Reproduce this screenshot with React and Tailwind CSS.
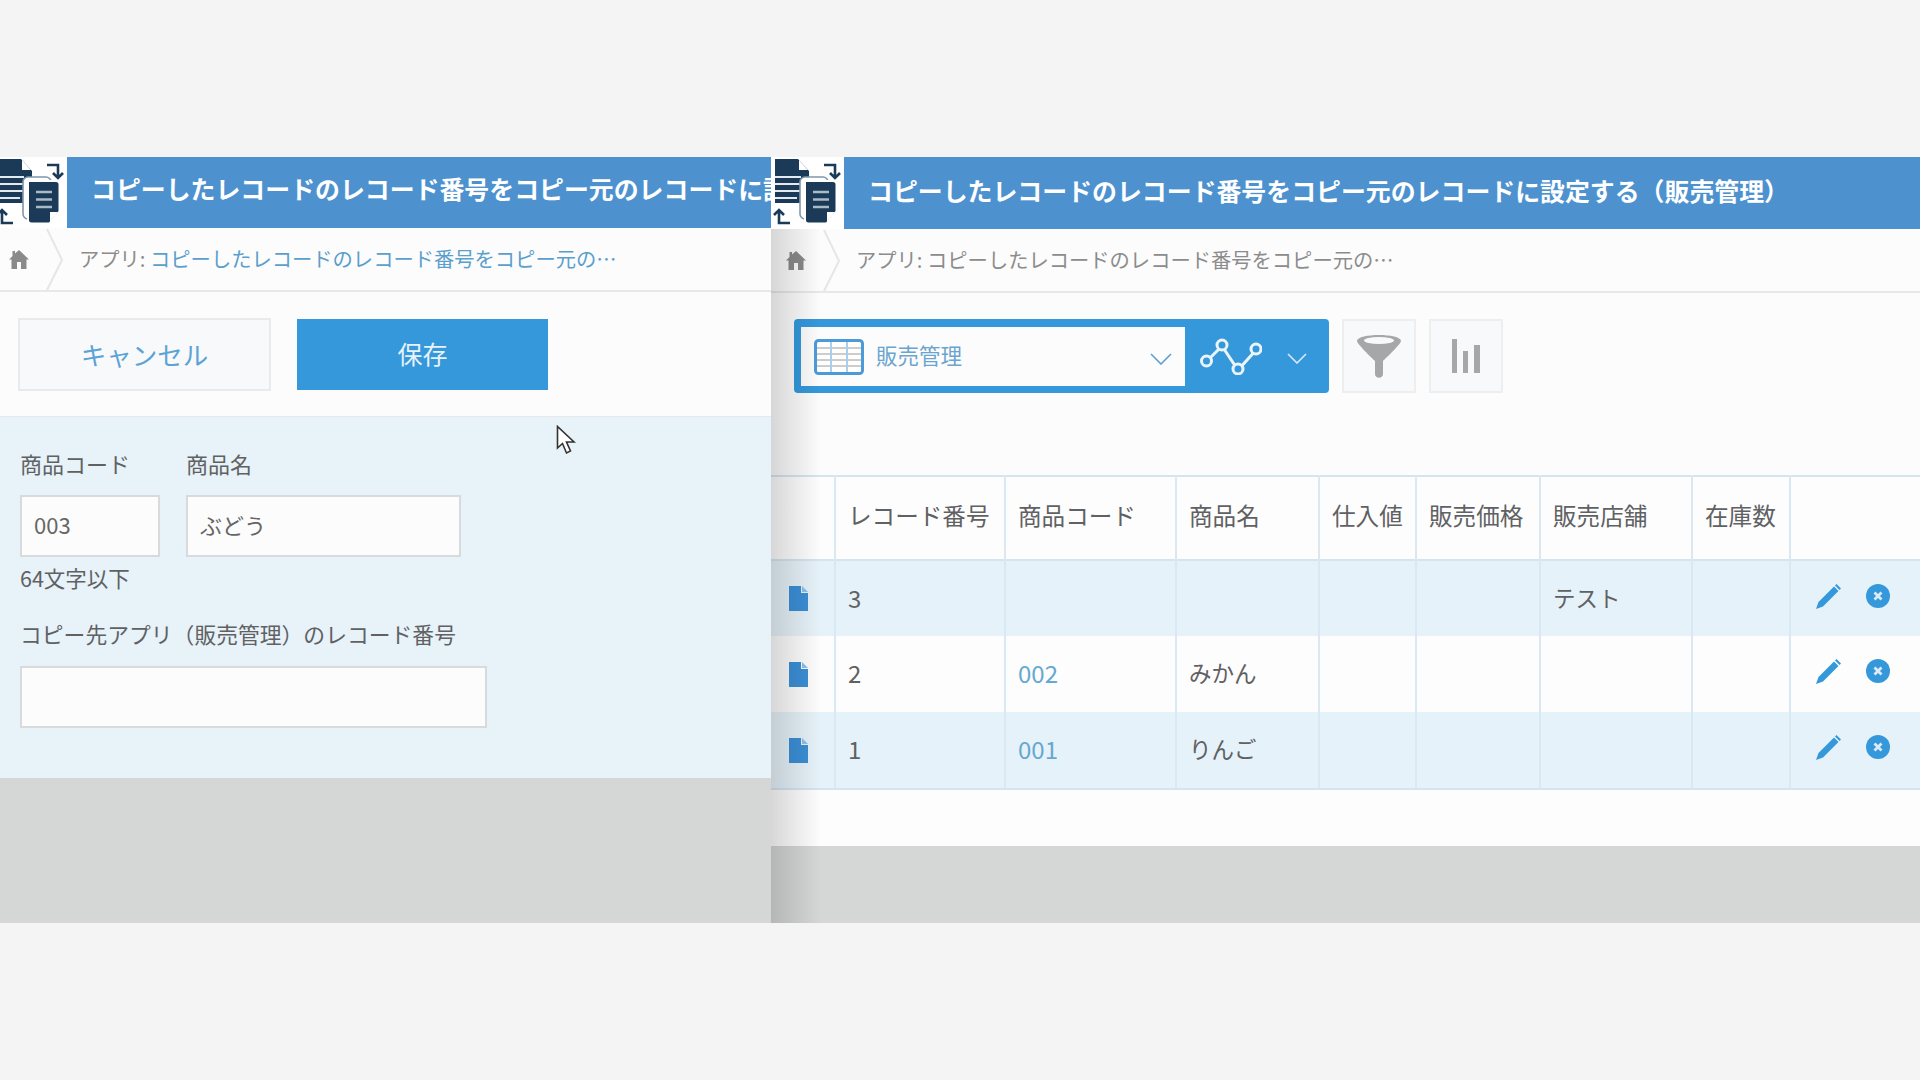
import React from "react";

const TITLE = "コピーしたレコードのレコード番号をコピー元のレコードに設定する（販売管理）";

function Logo() {
  return (
    <svg viewBox="0 0 73 72" className="h-[72px] w-[73px] shrink-0">
      <path d="M4 2H27L38 14V46H4Z" fill="#1b3a57" />
      <path d="M28 3L37 13H28Z" fill="#fff" />
      <path d="M4 20H30M4 27H30M4 34H30M4 41H26" stroke="#e4eaef" strokeWidth="2.2" />
      <rect x="29" y="20" width="28" height="42" rx="5" fill="#fff" stroke="#7f97ab" strokeWidth="1.6" />
      <path d="M33 23H62Q65 23 65 26V55L56 66H36Q33 66 33 63Z" fill="#fff" />
      <path d="M35 25H62Q64.5 25 64.5 27.5V54L55 65.5H37.5Q35 65.5 35 63Z" fill="#1b3a57" />
      <path d="M42 35H58M42 42.5H58M42 50H58" stroke="#a9bac8" strokeWidth="2.6" />
      <path d="M64 55L56 65V55Z" fill="#fff" />
      <path d="M53 8H64V20M59 16L64 21L69 16" fill="none" stroke="#1b3a57" strokeWidth="2.6" />
      <path d="M19 66H8V54M3 58L8 53L13 58" fill="none" stroke="#1b3a57" strokeWidth="2.6" />
    </svg>
  );
}

function Home() {
  return (
    <svg viewBox="0 0 20 20" className="h-5 w-5 shrink-0">
      <path d="M10 1L20 10.5H17.5V20H12V13H8V20H2.5V10.5H0L3.5 7V2H6V4.6Z" fill="#8a8a8a" />
    </svg>
  );
}

function Crumb({ left, link }) {
  return (
    <div className="flex h-[64px] shrink-0 items-center border-b-2 border-[#e8e8e8] bg-[#fcfcfc] text-[20.3px] text-[#8c8c8c]">
      <div className={left}>
        <Home />
      </div>
      <svg viewBox="0 0 18 63" className="ml-[17px] h-[63px] w-[18px] shrink-0">
        <path d="M1 1L16 32L1 62" fill="none" stroke="#e6e6e6" strokeWidth="2" />
      </svg>
      <span className="ml-[15px] pb-[2px] whitespace-nowrap">
        アプリ: <span className={link}>コピーしたレコードのレコード番号をコピー元の…</span>
      </span>
    </div>
  );
}

function Header({ logoClass, height, textClass }) {
  return (
    <div className={`flex shrink-0 overflow-hidden bg-white ${height}`}>
      <div className={logoClass}>
        <Logo />
      </div>
      <div className={`flex min-w-0 flex-1 items-center overflow-hidden bg-[#4d92cf] pl-[24px] text-[24.9px] font-bold whitespace-nowrap text-white ${textClass}`}>
        {TITLE}
      </div>
    </div>
  );
}

function Field({ label, cls, value }) {
  return (
    <div>
      <div className="mb-[17px] h-[30px] text-[22px] leading-[30px] text-[#5f6163] whitespace-nowrap">{label}</div>
      <div className={cls}>{value}</div>
    </div>
  );
}

const inputCls = "flex h-[62px] items-center border-2 border-[#d8dadb] bg-[#fcfcfc] px-3 pb-[3px] text-[22px] text-[#666]";

function LeftPanel() {
  return (
    <div className="relative flex h-full w-[771px] shrink-0 flex-col">
      <Header logoClass="-ml-[6px] w-[73px] shrink-0" height="h-[71px]" textClass="pb-[7px]" />
      <Crumb left="ml-[9px]" link="text-[#5b9fcc]" />
      <div className="flex h-[125px] shrink-0 items-center gap-[26px] border-b border-[#e6e8e9] bg-[#fcfcfc] pl-[18px]">
        <button className="h-[73px] w-[253px] border-2 border-[#e8ebec] bg-[#f7f9fa] text-[25.5px] text-[#5ba3d6]">キャンセル</button>
        <button className="h-[71px] w-[251px] bg-[#3498db] text-[25px] text-[#e8f2f9]">保存</button>
      </div>
      <div className="h-[361px] shrink-0 bg-[#e7f2f9] pt-[31px] pl-[20px]">
        <div className="flex gap-[26px]">
          <Field label="商品コード" cls={`${inputCls} w-[140px]`} value="003" />
          <Field label="商品名" cls={`${inputCls} w-[275px]`} value="ぶどう" />
        </div>
        <div className="mt-[6px] h-[30px] text-[21.5px] leading-[30px] text-[#5f6163]">64文字以下</div>
        <div className="mt-[26px] h-[30px] text-[21.8px] leading-[30px] text-[#5f6163] whitespace-nowrap">
          コピー先アプリ（販売管理）のレコード番号
        </div>
        <div className={`${inputCls} mt-[17px] w-[467px]`} />
      </div>
      <div className="flex-1 bg-[#d5d6d6]" />
      <svg viewBox="0 0 20 30" className="absolute top-[268px] left-[556px] h-[30px] w-[20px]">
        <path d="M1.5 1.5V23L6.5 18.5L10.5 28L14.5 26L10.5 17H18Z" fill="#fff" stroke="#333" strokeWidth="1.6" />
      </svg>
    </div>
  );
}

const COLS = [
  ["w-[64px]", ""],
  ["w-[170px]", "レコード番号"],
  ["w-[171px]", "商品コード"],
  ["w-[143px]", "商品名"],
  ["w-[97px]", "仕入値"],
  ["w-[124px]", "販売価格"],
  ["w-[152px]", "販売店舗"],
  ["w-[98px]", "在庫数"],
  ["w-[130px]", ""],
];

const ROWS = [
  { no: "3", code: "", name: "", store: "テスト", bg: "bg-[#e6f2f9]" },
  { no: "2", code: "002", name: "みかん", store: "", bg: "bg-[#fdfdfd]" },
  { no: "1", code: "001", name: "りんご", store: "", bg: "bg-[#e6f2f9]" },
];

const cell = "border-r-2 border-[#d9e8f2] px-[12px] pb-[2px] text-left font-normal whitespace-nowrap";

function DocIcon() {
  return (
    <svg viewBox="0 0 19 25" className="ml-[18px] h-[25px] w-[19px]">
      <path d="M0 0H12V7H19V25H0Z" fill="#3b8fd6" />
      <path d="M13 0L19 6H13Z" fill="#8fc0e8" />
    </svg>
  );
}

function PencilIcon() {
  return (
    <svg viewBox="0 0 26 26" className="h-[26px] w-[26px]">
      <path d="M0 26L2.5 19L18 3.5L22.5 8L7 23.5Z" fill="#3498db" />
      <path d="M20.5 1L25 5.5L23.5 7L19 2.5Z" fill="#3498db" />
    </svg>
  );
}

function CloseIcon() {
  return (
    <svg viewBox="0 0 24 24" className="h-[24px] w-[24px]">
      <circle cx="12" cy="12" r="12" fill="#3498db" />
      <path d="M8.5 8.5L15.5 15.5M15.5 8.5L8.5 15.5" stroke="#dcebf6" strokeWidth="2.8" />
    </svg>
  );
}

function Toolbar() {
  return (
    <div className="flex h-[182px] shrink-0 items-start gap-[13px] bg-[#fcfcfc] pt-[26px] pl-[23px]">
      <div className="flex h-[74px] w-[535px] items-center rounded bg-[#3498db] pl-[7px]">
        <div className="flex h-[59px] w-[384px] items-center bg-[#fcfcfc] pl-[13px]">
          <svg viewBox="0 0 50 36" className="mt-[2px] h-[36px] w-[50px] shrink-0">
            <rect x="1.5" y="1.5" width="47" height="33" rx="3" fill="#fff" stroke="#4d9ad8" strokeWidth="3" />
            <path d="M3 9H47M3 15H47M3 21H47M3 27H47" stroke="#9a9a9a" strokeWidth="1" />
            <path d="M17 3V33M33 3V33" stroke="#a8d0ee" strokeWidth="2" />
          </svg>
          <span className="ml-[12px] pb-[2px] text-[21.5px] text-[#6ba5cf]">販売管理</span>
          <svg viewBox="0 0 22 12" className="mt-[5px] mr-[13px] ml-auto h-[12px] w-[22px]">
            <path d="M1 1L11 11L21 1" fill="none" stroke="#5c9fd0" strokeWidth="1.6" />
          </svg>
        </div>
        <svg viewBox="0 0 62 38" className="ml-[15px] h-[38px] w-[62px] shrink-0">
          <path d="M7 24L22 9L38 33L57 12" fill="none" stroke="#eaf4fb" strokeWidth="3" />
          <circle cx="6.5" cy="24" r="5" fill="#3498db" stroke="#eaf4fb" strokeWidth="3" />
          <circle cx="22" cy="8" r="5" fill="#3498db" stroke="#eaf4fb" strokeWidth="3" />
          <circle cx="38" cy="32" r="5" fill="#3498db" stroke="#eaf4fb" strokeWidth="3" />
          <circle cx="56" cy="12" r="5" fill="#3498db" stroke="#eaf4fb" strokeWidth="3" />
        </svg>
        <svg viewBox="0 0 20 11" className="mt-[5px] ml-[25px] h-[11px] w-[20px] shrink-0">
          <path d="M1 1L10 10L19 1" fill="none" stroke="#d6e9f7" strokeWidth="1.6" />
        </svg>
      </div>
      <div className="flex h-[74px] w-[74px] items-center justify-center border-2 border-[#eceeef] bg-[#f8f9fa]">
        <svg viewBox="0 0 44 44" className="h-[44px] w-[44px]">
          <path d="M0 7C0 -1 44 -1 44 7C44 10 29 24 26 27V40C26 45 18 45 18 40V27C15 24 0 10 0 7Z" fill="#a5a7a9" />
          <ellipse cx="22" cy="6.5" rx="15" ry="3.5" fill="#f8f9fa" />
        </svg>
      </div>
      <div className="flex h-[74px] w-[74px] items-center justify-center border-2 border-[#eceeef] bg-[#f8f9fa]">
        <svg viewBox="0 0 30 34" className="h-[34px] w-[30px]">
          <path d="M1 0H6V34H1ZM12 12H17V34H12ZM23 6H29V34H23Z" fill="#a5a7a9" />
        </svg>
      </div>
    </div>
  );
}

function RecordTable() {
  return (
    <table className="w-[1149px] table-fixed border-collapse text-[22.5px] text-[#5f6163]">
      <thead>
        <tr className="h-[84px] border-y-2 border-[#d4e5f0] bg-[#fdfdfd] text-[23.6px]">
          {COLS.map(([w, t], i) => (
            <th key={i} className={`${w} ${cell} !pb-[4px] ${i === 8 ? "!border-r-0" : ""}`}>{t}</th>
          ))}
        </tr>
      </thead>
      <tbody>
        {ROWS.map((r) => (
          <tr key={r.no} className={`h-[76px] ${r.bg}`}>
            <td className={`${cell} !px-0 !pb-0`}><DocIcon /></td>
            <td className={`${cell} text-[24px]`}>{r.no}</td>
            <td className={`${cell} text-[24px] text-[#66a8cf]`}>{r.code}</td>
            <td className={cell}>{r.name}</td>
            <td className={cell} />
            <td className={cell} />
            <td className={cell}>{r.store}</td>
            <td className={cell} />
            <td className="pl-[25px]">
              <div className="-mt-[6px] flex items-center gap-[24px]">
                <PencilIcon />
                <CloseIcon />
              </div>
            </td>
          </tr>
        ))}
      </tbody>
    </table>
  );
}

function RightPanel() {
  return (
    <div className="relative flex h-full min-w-0 flex-1 flex-col">
      <Header logoClass="w-[73px] shrink-0" height="h-[72px]" textClass="pb-[4px]" />
      <Crumb left="ml-[15px]" link="" />
      <Toolbar />
      <RecordTable />
      <div className="h-[58px] shrink-0 border-t-2 border-[#d4e5f0] bg-[#fdfdfd]" />
      <div className="flex-1 bg-[#d5d6d6]" />
      <div className="pointer-events-none absolute top-[72px] bottom-0 left-0 w-[50px] bg-gradient-to-r from-black/15 to-transparent" />
    </div>
  );
}

export default function App() {
  return (
    <div
      className="h-[1080px] w-[1920px] overflow-hidden bg-[#f4f4f4] pt-[157px]"
      style={{ fontFamily: '"Noto Sans CJK JP", "Noto Sans", sans-serif' }}
    >
      <div className="flex h-[766px]">
        <LeftPanel />
        <RightPanel />
      </div>
    </div>
  );
}
